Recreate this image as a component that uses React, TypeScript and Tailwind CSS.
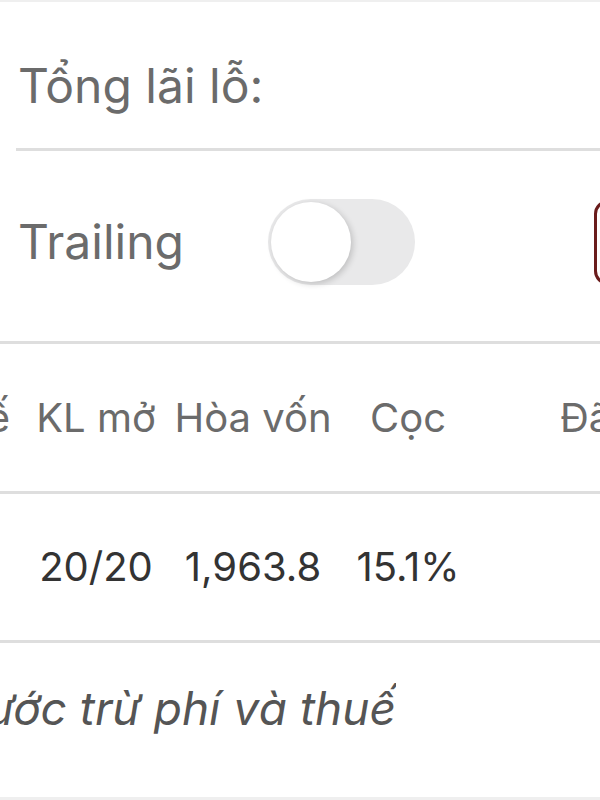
export default function App() {
  const font = { fontFamily: 'Inter, "Noto Sans", sans-serif' }
  return (
    <div className="w-[600px] h-[800px] overflow-hidden bg-white" style={font}>
      <div className="h-[2px] bg-[#efefef]" />

      <div className="h-[146px] flex items-center pl-[18px] pt-[22px]">
        <span className="text-[48px] text-[#6b6b6b] leading-none">Tổng lãi lỗ:</span>
      </div>
      <div className="ml-[16px] h-[3px] bg-[#dedede]" />

      <div className="h-[190px] flex items-center pl-[18px] pb-[8px]">
        <div className="w-[250px] shrink-0 text-[48px] text-[#6b6b6b] leading-none">Trailing</div>
        <div className="w-[147px] h-[86px] shrink-0 rounded-full bg-[#e9e9ea] p-[3px] flex items-center">
          <div className="w-[80px] h-[80px] rounded-full bg-white shadow-[2px_2px_6px_rgba(0,0,0,0.18)]" />
        </div>
        <div className="ml-[179px] w-[60px] h-[85px] shrink-0 rounded-[14px] border-[3px] border-[#6a1c1c]" />
      </div>
      <div className="h-[3px] bg-[#dedede]" />

      <div className="h-[147px] flex items-center -ml-[130px] whitespace-nowrap text-[40px] text-[#6b6b6b]">
        <div className="w-[150px] shrink-0 text-right pr-[10px]">Vị thế</div>
        <div className="w-[152px] shrink-0 text-center">KL mở</div>
        <div className="w-[162px] shrink-0 text-center">Hòa vốn</div>
        <div className="w-[148px] shrink-0 text-center">Cọc</div>
        <div className="shrink-0 pl-[78px]">Đã đóng</div>
      </div>
      <div className="h-[3px] bg-[#dedede]" />

      <div className="h-[146px] flex items-center -ml-[130px] whitespace-nowrap text-[40px] text-[#333333]">
        <div className="w-[150px] shrink-0" />
        <div className="w-[152px] shrink-0 text-center">20/20</div>
        <div className="w-[162px] shrink-0 text-center">1,963.8</div>
        <div className="w-[148px] shrink-0 text-center">15.1%</div>
      </div>
      <div className="h-[3px] bg-[#dedede]" />

      <div className="h-[154px] flex items-center">
        <div className="w-[396px] shrink-0 overflow-hidden flex justify-end whitespace-nowrap pb-[24px]">
          <span className="text-[46px] italic text-[#555555]">*Lãi lỗ tạm tính trước trừ phí và thuế</span>
        </div>
      </div>
      <div className="h-[6px] bg-[#efefef]" />
    </div>
  )
}
